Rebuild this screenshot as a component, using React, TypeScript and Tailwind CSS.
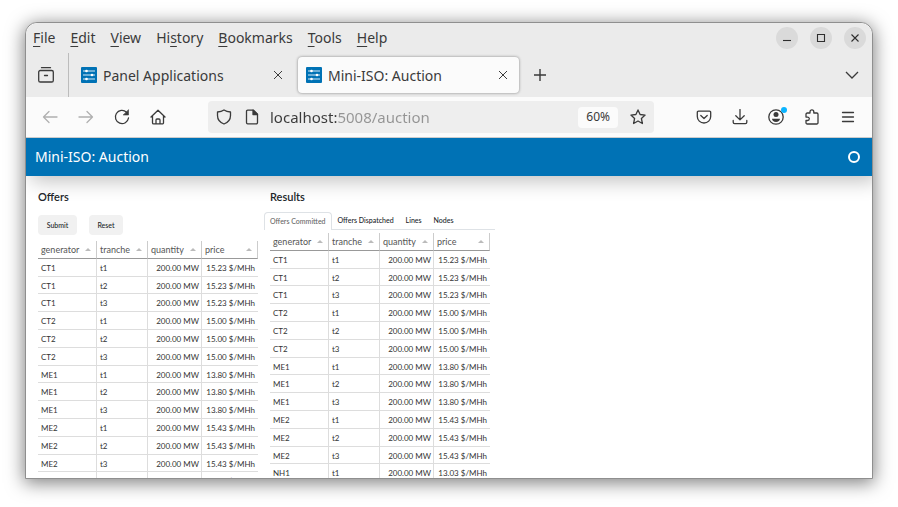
import React from "react";

type Row = [string, string, string, string];

const offers: Row[] = [
  ["CT1", "15.23"],
  ["CT2", "15.00"],
  ["ME1", "13.80"],
  ["ME2", "15.43"],
  ["NH1", "13.03"],
]
  .flatMap(([gen, price]) =>
    ["t1", "t2", "t3"].map((t): Row => [gen, t, "200.00 MW", `${price} $/MHh`])
  )
  .slice(0, 13);

const menus: [string, string, string][] = [
  ["", "F", "ile"],
  ["", "E", "dit"],
  ["", "V", "iew"],
  ["Hi", "s", "tory"],
  ["", "B", "ookmarks"],
  ["", "T", "ools"],
  ["", "H", "elp"],
];

function Icon({ children, className = "" }: { children: React.ReactNode; className?: string }) {
  return (
    <svg
      viewBox="0 0 16 16"
      className={`size-4 shrink-0 ${className}`}
      fill="none"
      stroke="currentColor"
      strokeWidth="1.3"
      strokeLinecap="round"
      strokeLinejoin="round"
      aria-hidden="true"
    >
      {children}
    </svg>
  );
}

function ToolButton({ label, children, className = "" }: { label: string; children: React.ReactNode; className?: string }) {
  return (
    <button aria-label={label} className={`relative flex h-8 w-9 shrink-0 items-center justify-center ${className}`}>
      {children}
    </button>
  );
}

function WindowButton({ label, children }: { label: string; children: React.ReactNode }) {
  return (
    <button aria-label={label} className="flex size-[22px] items-center justify-center rounded-full bg-[#dadada]">
      <svg viewBox="0 0 22 22" className="size-[22px]" fill="none" stroke="#2e2e2e" strokeWidth="1.1" aria-hidden="true">
        {children}
      </svg>
    </button>
  );
}

function Favicon() {
  return (
    <svg viewBox="0 0 16 16" className="size-4 shrink-0" aria-hidden="true">
      <rect width="16" height="16" rx="1" fill="#0072b5" />
      <path d="M2 4h12M2 8h12M2 12h12" stroke="#d9ecf8" strokeWidth="1" />
      <g fill="#fff">
        <circle cx="5.5" cy="4" r="1.3" />
        <circle cx="11" cy="8" r="1.3" />
        <circle cx="5.5" cy="12" r="1.3" />
      </g>
    </svg>
  );
}

function BrowserTab({ title, active = false }: { title: string; active?: boolean }) {
  return (
    <div
      className={`flex h-9 w-[221px] shrink-0 items-center rounded pl-2 pr-[11px] ${
        active ? "bg-[#fbfbfb] shadow-[0_0_3px_rgba(0,0,0,0.45)]" : ""
      }`}
    >
      <button role="tab" aria-selected={active} className="flex min-w-0 flex-1 items-center gap-1.5 text-left whitespace-nowrap">
        <Favicon />
        {title}
      </button>
      <button aria-label={`Close ${title}`}>
        <svg viewBox="0 0 10 10" className="size-2.5" stroke="#3c3c3c" strokeWidth="1" aria-hidden="true">
          <path d="M1 1l8 8M9 1l-8 8" />
        </svg>
      </button>
    </div>
  );
}

function DataTable({ label, rows }: { label: string; rows: Row[] }) {
  const cell = "border-b border-[#ddd] pt-0.5 pb-0 align-top leading-[14px]";
  return (
    <table
      aria-label={label}
      className="w-[220px] table-fixed border-separate border-spacing-0 text-[8px] whitespace-nowrap text-[#333]"
    >
      <colgroup>
        <col className="w-[59px]" />
        <col className="w-[51px]" />
        <col className="w-[54px]" />
        <col className="w-[56px]" />
      </colgroup>
      <thead>
        <tr className="h-[18px]">
          {["generator", "tranche", "quantity", "price"].map((h) => (
            <th
              key={h}
              scope="col"
              className="border-r border-b border-r-[#ccc] border-b-[#999] px-[3px] py-0 text-left text-[9px] leading-4 font-normal text-[#555]"
            >
              <span className="flex items-center justify-between">
                {h}
                <svg viewBox="0 0 6 3" className="mr-0.5 h-[3px] w-1.5" fill="#bbb" aria-hidden="true">
                  <path d="M0 3L3 0l3 3z" />
                </svg>
              </span>
            </th>
          ))}
        </tr>
      </thead>
      <tbody>
        {rows.map(([gen, tranche, quantity, price], i) => (
          <tr key={i} className="h-[18px] nth-[5n+2]:h-[17px]">
            <td className={`${cell} border-r px-[3px]`}>{gen}</td>
            <td className={`${cell} border-r px-[3px]`}>{tranche}</td>
            <td className={`${cell} border-r px-0.5 text-right`}>{quantity}</td>
            <td className={`${cell} px-[3px] text-right`}>{price}</td>
          </tr>
        ))}
      </tbody>
    </table>
  );
}

export default function App() {
  return (
    <div className="flex h-screen flex-col bg-white px-[25px] pt-[22px] pb-7 font-['Noto_Sans',sans-serif] text-[14px] text-[#3a3a3a]">
      <div className="flex min-h-0 flex-1 flex-col rounded-t-xl border border-[#8f8f8f] bg-white shadow-[0_3px_18px_1px_rgba(0,0,0,0.5)]">
        <header className="shrink-0 rounded-t-xl bg-[#ebebeb]">
          <div className="flex h-[30px] items-center justify-between pr-1.5 pl-[7px]">
            <nav aria-label="Menu bar" className="flex gap-[15px]">
              {menus.map(([pre, key, post]) => (
                <button key={key + post} className="leading-5">
                  {pre}
                  <span className="underline decoration-1 underline-offset-[3px]">{key}</span>
                  {post}
                </button>
              ))}
            </nav>
            <div className="flex gap-3">
              <WindowButton label="Minimize">
                <path d="M7 13.5h8" />
              </WindowButton>
              <WindowButton label="Maximize">
                <path d="M7.5 7.5h7v7h-7z" />
              </WindowButton>
              <WindowButton label="Close">
                <path d="M7.5 7.5l7 7M14.5 7.5l-7 7" />
              </WindowButton>
            </div>
          </div>

          <div className="flex h-11 items-stretch">
            <div className="flex w-[43px] shrink-0 items-center justify-center border-r border-[#bcbcbc] pr-0.5">
              <button aria-label="Recent browsing">
                <Icon>
                  <path d="M3.500 .7h9M2.300 3.500h11.400a1.600 1.600 0 0 1 1.600 1.600v8.300a1.600 1.600 0 0 1-1.600 1.600H2.300a1.600 1.600 0 0 1-1.600-1.600V5.100a1.600 1.600 0 0 1 1.600-1.600zM6.500 8.500h3" />
                </Icon>
              </button>
            </div>
            <div role="tablist" className="flex flex-1 items-center gap-1 pl-1">
              <BrowserTab title="Panel Applications" />
              <BrowserTab title="Mini-ISO: Auction" active />
              <button aria-label="New tab" className="ml-2.5">
                <svg viewBox="0 0 14 14" className="size-[14px]" stroke="#3a3a3a" strokeWidth="1.4" aria-hidden="true">
                  <path d="M7 1v12M1 7h12" />
                </svg>
              </button>
            </div>
            <button aria-label="List all tabs" className="mr-[13px]">
              <svg viewBox="0 0 14 8" className="h-2 w-[14px]" fill="none" stroke="#3a3a3a" strokeWidth="1.3" aria-hidden="true">
                <path d="M1 1l6 6 6-6" />
              </svg>
            </button>
          </div>
        </header>

        <div className="flex h-[41px] shrink-0 items-center border-b border-[#ccc] bg-[#fbfbfb] px-1.5">
          <ToolButton label="Back" className="text-[#b0b0b0]">
            <Icon>
              <path d="M15 8H1.500M7 2.500L1.500 8 7 13.500" />
            </Icon>
          </ToolButton>
          <ToolButton label="Forward" className="text-[#b0b0b0]">
            <Icon>
              <path d="M1 8h13.500M9 2.500L14.500 8 9 13.500" />
            </Icon>
          </ToolButton>
          <ToolButton label="Reload">
            <Icon>
              <path d="M14.500 9A6.600 6.600 0 1 1 12.500 3.200" />
              <path d="M14.500 1v5h-5z" fill="currentColor" strokeWidth=".6" />
            </Icon>
          </ToolButton>
          <ToolButton label="Home">
            <Icon>
              <path d="M1 8l7-6.700L15 8M2.500 7v6.700a1.200 1.200 0 0 0 1.200 1.200h8.600a1.200 1.200 0 0 0 1.200-1.200V7M6 14.800V11a1 1 0 0 1 1-1h2a1 1 0 0 1 1 1v3.800" />
            </Icon>
          </ToolButton>

          <div className="mr-8 ml-8 flex h-8 flex-1 items-center rounded bg-[#eeeeee] pr-2 pl-2">
            <Icon>
              <path d="M8 1c2 1.400 4.300 1.900 6.500 2v3.500c0 4-2.500 7-6.500 8.500-4-1.500-6.500-4.500-6.500-8.500V3C3.700 2.900 6 2.400 8 1z" />
            </Icon>
            <Icon className="ml-3">
              <path d="M9.500 1.200H3.700a1.200 1.200 0 0 0-1.200 1.200v11.200a1.200 1.200 0 0 0 1.200 1.200h8.600a1.200 1.200 0 0 0 1.200-1.200V5.200z" />
              <path d="M9 1.200v4.300h4.500z" fill="currentColor" />
            </Icon>
            <input
              type="text"
              aria-label="Address"
              defaultValue="localhost:5008/auction"
              className="ml-2.5 min-w-0 flex-1 bg-[linear-gradient(to_right,#3a3a3a_67px,#949494_67px)] bg-clip-text text-[15px] text-transparent outline-none"
            />
            <button className="h-[21px] rounded bg-[#fbfbfb] px-2 text-[12px] leading-5">60%</button>
            <button aria-label="Bookmark this page" className="ml-3">
              <Icon>
                <path d="M8 .9l2.100 4.600 5 .6-3.700 3.400 1 5L8 12l-4.400 2.500 1-5L.9 6.100l5-.6z" />
              </Icon>
            </button>
          </div>

          <ToolButton label="Save to Pocket">
            <Icon>
              <path d="M2.500 2.200h11a1.200 1.200 0 0 1 1.200 1.200V7.500a6.700 6.500 0 0 1-13.400 0V3.400a1.200 1.200 0 0 1 1.200-1.200zM4.800 6.500L8 9.500l3.200-3" />
            </Icon>
          </ToolButton>
          <ToolButton label="Downloads">
            <Icon>
              <path d="M8 .5v10.200M3.800 6.800L8 10.900l4.200-4.100M1.200 11.500v1.800a1.400 1.400 0 0 0 1.400 1.400h10.800a1.400 1.400 0 0 0 1.400-1.400v-1.800" />
            </Icon>
          </ToolButton>
          <ToolButton label="Account">
            <Icon>
              <circle cx="8" cy="8" r="7.200" />
              <circle cx="8" cy="5.600" r="2.500" fill="currentColor" stroke="none" />
              <path d="M4 9.800h8c0 2-1.700 3.200-4 3.200s-4-1.200-4-3.200z" fill="currentColor" stroke="none" />
            </Icon>
            <span className="absolute top-1.5 right-[7px] size-1.5 rounded-full bg-[#0bb4ff]" />
          </ToolButton>
          <ToolButton label="Extensions">
            <Icon>
              <path d="M2 6.500V5.200A1.200 1.200 0 0 1 3.200 4H6V2.800a1.900 1.900 0 0 1 3.800 0V4h3A1.200 1.200 0 0 1 14 5.200v8.600a1.200 1.200 0 0 1-1.200 1.200H3.200A1.200 1.200 0 0 1 2 13.800V11.500h1.600a1.700 1.700 0 0 0 0-3.400H2z" />
            </Icon>
          </ToolButton>
          <ToolButton label="Application menu">
            <Icon>
              <path d="M2.500 3.500h11M2.500 8h11M2.500 12.500h11" />
            </Icon>
          </ToolButton>
        </div>

        <div className="flex min-h-0 flex-1 flex-col overflow-hidden">
          <div className="flex h-[38px] shrink-0 items-center justify-between bg-[#0072b5] pr-3 pl-[9px] text-white shadow-[5px_5px_20px_silver]">
            <a href="#auction" className="leading-5">Mini-ISO: Auction</a>
            <span role="status" aria-label="Idle" className="size-3 rounded-full border-2 border-white" />
          </div>

          <main className="flex items-start gap-1.5 pt-[14px] pl-3 font-[Lato,sans-serif] text-[#212529]">
            <section className="w-[220px] shrink-0">
              <h2 className="text-[11px] leading-[14px] font-semibold">Offers</h2>
              <div className="mt-[11px] mb-1.5 flex gap-3 text-[7px] font-medium">
                <button className="h-5 w-[39px] rounded-sm bg-[#f1f1f1]">Submit</button>
                <button className="h-5 w-[34px] rounded-sm bg-[#f1f1f1]">Reset</button>
              </div>
              <DataTable label="Offers" rows={offers} />
            </section>
            <section className="w-[231px] shrink-0">
              <h2 className="pl-[6px] text-[11px] leading-[14px] font-semibold">Results</h2>
              <div role="tablist" className="mt-2 mb-[3px] flex h-[18px] border-b border-[#dee2e6] text-[7px] font-medium whitespace-nowrap">
                <button role="tab" aria-selected="true" className="-mb-px rounded-t-sm border border-b-0 border-[#dee2e6] bg-white px-[5px] text-[#666]">
                  Offers Committed
                </button>
                {["Offers Dispatched", "Lines", "Nodes"].map((t) => (
                  <button key={t} role="tab" aria-selected="false" className="px-[6px]">
                    {t}
                  </button>
                ))}
              </div>
              <div className="pl-[6px]">
                <DataTable label="Offers committed" rows={offers} />
              </div>
            </section>
          </main>
        </div>
      </div>
    </div>
  );
}
